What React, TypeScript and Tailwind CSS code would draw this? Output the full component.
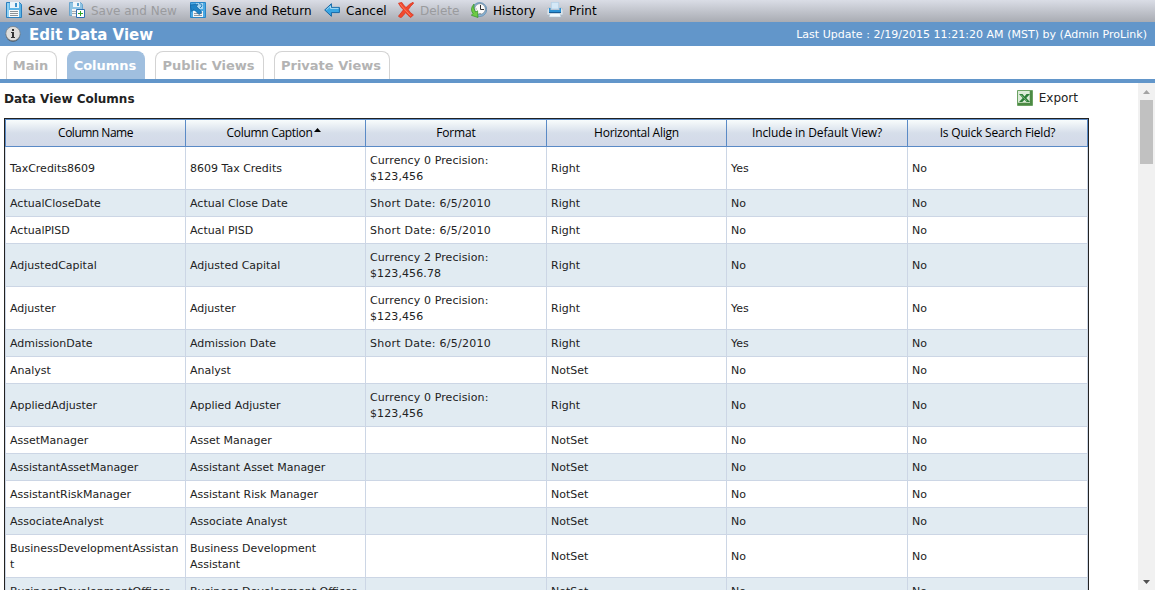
import React from "react";

const SaveIcon = () => (
	<svg className="w-4 h-4 shrink-0" viewBox="0 0 16 16" aria-hidden="true">
		<path d="M.5.5h13l2 2v13H.5z" fill="#5db4e6" stroke="#2a7fbf" />
		<path d="M1 1h2v14H1z" fill="#8fd0f3" />
		<path d="M4 0h9v6H4z" fill="#eaf4fb" />
		<path d="M9 1h2v4H9z" fill="#3a8fca" />
		<path d="M3 8h10v7H3z" fill="#fafafa" />
		<path d="M4 9.5h8M4 11.5h8M4 13.5h8" stroke="#8d9296" />
	</svg>
);

const SaveNewIcon = () => (
	<svg className="w-4 h-4 shrink-0" viewBox="0 0 16 16" aria-hidden="true">
		<path d="M.5.5h11l2 2v11H.5z" fill="#8fc4e4" stroke="#6ba5cd" />
		<path d="M4 0h7v5H4z" fill="#f0f6fa" />
		<path d="M8 1h2v3H8z" fill="#5a9fcc" />
		<path d="M3 7h8v7H3z" fill="#f5f5f5" />
		<path d="M3 9.5h5M3 11.5h5" stroke="#a5aaae" />
		<path d="M7.5 7.5h8v8h-8z" fill="#fff" stroke="#2f70b3" />
		<path d="M9 11.5h5M11.5 9v5" stroke="#30a52c" />
	</svg>
);

const SaveReturnIcon = () => (
	<svg className="w-4 h-4 shrink-0" viewBox="0 0 16 16" aria-hidden="true">
		<path d="M.5.5h15v15H.5z" fill="#4ba9e3" stroke="#2a86c8" />
		<path d="M6 1h7v6H6z" fill="#a9d6f1" />
		<path d="M3 9h10v6H3z" fill="#f5f6f7" />
		<path d="M4 11.5h8M4 13.5h8" stroke="#9198a0" />
		<path d="M0 3 8 2.2 6.6 4.6 12 10.2 9 12.6 4 7.4 1.6 9.4z" fill="#1f83c6" stroke="#0e5c98" strokeWidth=".6" />
		<path d="M9 1.6q3 0 3 2.4l-2 2" fill="none" stroke="#267fbe" />
	</svg>
);

const CancelIcon = () => (
	<svg className="w-4 h-4 shrink-0" viewBox="0 0 16 16" aria-hidden="true">
		<path
			d="M.7 8 7.4 1.7V5.4H15.4V10.6H7.4V14.3z"
			fill="#39a6e3"
			stroke="#1467a6"
			strokeLinejoin="round"
		/>
		<path d="M2.3 7.8 6.5 4V6.4h8" fill="none" stroke="#a8dcf5" />
	</svg>
);

const DeleteIcon = () => (
	<svg className="w-4 h-4 shrink-0" viewBox="0 0 16 16" aria-hidden="true">
		<path
			d="M.5 1.2 3.8.4Q5.5 3.2 8 5.6 11 2 15 .3L15.7 1.3Q12.4 4 10.2 7.7 12.2 11 15.4 13L12.6 15.5Q9.8 13.4 7.6 10.6 5.3 14 2.8 15.8L.4 14.3Q3 11 5.4 7.8 2.3 5 .5 1.2z"
			fill="#f2492d"
			stroke="#d42b17"
			strokeWidth=".7"
		/>
		<path d="M2 1.7Q5 6 12.5 13.5" fill="none" stroke="#ff8b6b" strokeWidth=".8" />
	</svg>
);

const HistoryIcon = () => (
	<svg className="w-4 h-4 shrink-0" viewBox="0 0 16 16" aria-hidden="true">
		<circle cx="8.7" cy="7.5" r="7" fill="#8fb9d8" stroke="#477ba8" strokeWidth=".6" />
		<circle cx="9" cy="7" r="5.4" fill="#fafafa" stroke="#516779" strokeWidth=".6" />
		<path d="M9.5 3v4.5H13" fill="none" stroke="#333" />
		<path d="M9 11v1M4.8 7h.8" stroke="#444" strokeWidth=".8" />
		<path
			d="M3 2Q-1.5 7 2 11.5L.3 13.3 7 15.5 6.6 8.8 4.5 10Q2 6.5 3 2z"
			fill="#6ecb43"
			stroke="#319027"
			strokeWidth=".7"
		/>
	</svg>
);

const PrintIcon = () => (
	<svg className="w-4 h-4 shrink-0" viewBox="0 0 16 16" aria-hidden="true">
		<path d="M4.3.3h7.4V7H4.3z" fill="#d4e8f7" stroke="#a5c8e3" strokeWidth=".6" />
		<path d="M1 6h2v3h10V6h2l1 2v5H0V8z" fill="#dce4ea" stroke="#a1b0bc" strokeWidth=".5" />
		<path d="M2 6h1.5v2h9V6H14v4.5H2z" fill="#2b91d5" />
		<path d="M2 10h12v1H2z" fill="#175c96" />
		<path d="M3 11.5h10l1 3.5H2z" fill="#f3f9fd" stroke="#a5bdd0" strokeWidth=".5" />
	</svg>
);

const InfoIcon = () => (
	<svg className="w-4 h-4 shrink-0" viewBox="0 0 16 16" aria-hidden="true">
		<circle cx="8" cy="8.6" r="7.2" fill="#48535e" />
		<circle cx="8" cy="7.6" r="7.2" fill="#dededc" stroke="#777c81" strokeWidth=".7" />
		<path d="M7 3h2v2H7zM6 6h3v5h1v1H6v-1h1V7H6z" fill="#333" />
	</svg>
);

const ExcelIcon = () => (
	<svg className="w-4 h-4 shrink-0" viewBox="0 0 16 16" aria-hidden="true">
		<path d="M.5.5h15v15H.5z" fill="#b5d3ae" stroke="#6ba263" />
		<path d="M1 1h11v11H1z" fill="#dcebd8" />
		<path d="M1 14h13V1" fill="none" stroke="#4c8a44" strokeWidth="2" />
		<path d="M2 4h3.5l2 2.4L9.5 4H13L9.3 8l3.7 4H9.6L7.5 9.7 5.3 12H2l3.7-4z" fill="#2c7d38" />
		<path d="M4 4.8l6 6.4" stroke="#86bf80" strokeWidth=".8" />
	</svg>
);

const actions = [
	{ label: "Save", icon: <SaveIcon />, className: "w-[63px]", text: "" },
	{ label: "Save and New", icon: <SaveNewIcon />, className: "w-[121px]", text: "text-[#9a9b9e]" },
	{ label: "Save and Return", icon: <SaveReturnIcon />, className: "w-[134px]", text: "" },
	{ label: "Cancel", icon: <CancelIcon />, className: "w-[74px]", text: "" },
	{ label: "Delete", icon: <DeleteIcon />, className: "w-[73px]", text: "text-[#9a9b9e]" },
	{ label: "History", icon: <HistoryIcon />, className: "w-[76px]", text: "" },
	{ label: "Print", icon: <PrintIcon />, className: "w-[60px]", text: "" },
];

const tabs = [
	{ label: "Main", className: "w-[51px]" },
	{ label: "Columns", className: "w-[78px]", active: true },
	{ label: "Public Views", className: "w-[109px]" },
	{ label: "Private Views", className: "w-[116px]" },
];

const headers = [
	{ label: "Column Name", className: "tracking-[-0.5px]" },
	{ label: "Column Caption", className: "tracking-[-0.3px] pr-1", sorted: true },
	{ label: "Format", className: "tracking-[-0.15px]" },
	{ label: "Horizontal Align", className: "tracking-[-0.25px]" },
	{ label: "Include in Default View?", className: "tracking-[-0.12px]" },
	{ label: "Is Quick Search Field?", className: "tracking-[-0.18px]" },
];

const currency0 = "Currency 0 Precision:\n$123,456";
const currency2 = "Currency 2 Precision:\n$123,456.78";
const shortDate = "Short Date: 6/5/2010";

const rows = [
	["TaxCredits8609", "8609 Tax Credits", currency0, "Right", "Yes", "No"],
	["ActualCloseDate", "Actual Close Date", shortDate, "Right", "No", "No"],
	["ActualPISD", "Actual PISD", shortDate, "Right", "No", "No"],
	["AdjustedCapital", "Adjusted Capital", currency2, "Right", "No", "No"],
	["Adjuster", "Adjuster", currency0, "Right", "Yes", "No"],
	["AdmissionDate", "Admission Date", shortDate, "Right", "Yes", "No"],
	["Analyst", "Analyst", "", "NotSet", "No", "No"],
	["AppliedAdjuster", "Applied Adjuster", currency0, "Right", "No", "No"],
	["AssetManager", "Asset Manager", "", "NotSet", "No", "No"],
	["AssistantAssetManager", "Assistant Asset Manager", "", "NotSet", "No", "No"],
	["AssistantRiskManager", "Assistant Risk Manager", "", "NotSet", "No", "No"],
	["AssociateAnalyst", "Associate Analyst", "", "NotSet", "No", "No"],
	["BusinessDevelopmentAssistant", "Business Development Assistant", "", "NotSet", "No", "No"],
	["BusinessDevelopmentOfficer", "Business Development Officer", "", "NotSet", "No", "No"],
];

const GRID = "grid grid-cols-[180px_180px_181px_180px_181px_180px]";

const App = () => {
	return (
		<div className="flex flex-col w-[1155px] h-[590px] overflow-hidden bg-white text-[#222] font-['DejaVu_Sans',sans-serif]">
			<div className="flex h-[22px] shrink-0 pl-1.5 bg-linear-to-b from-[#dadde6] to-[#a9acb3] text-[12px] leading-[19px] text-black">
				{actions.map((action) => (
					<button
						key={action.label}
						className={`flex shrink-0 pt-0.5 gap-1.5 whitespace-nowrap ${action.className}`}
					>
						{action.icon}
						<span className={action.text}>{action.label}</span>
					</button>
				))}
			</div>

			<div className="flex h-6 shrink-0 items-center justify-between bg-[#6296ca] pl-[5px] pr-2 text-white">
				<div className="flex items-center gap-2">
					<InfoIcon />
					<h1 className="pt-0.5 text-[15px] leading-[22px] font-bold">Edit Data View</h1>
				</div>
				<span className="pt-0.5 text-[11px] leading-[22px] tracking-[0.02px]">
					Last Update : 2/19/2015 11:21:20 AM (MST) by (Admin ProLink)
				</span>
			</div>

			<div className="flex h-[37px] shrink-0 items-end gap-2.5 border-b-4 border-[#6296ca] pl-1.5">
				{tabs.map((tab) => (
					<button
						key={tab.label}
						className={`h-7 rounded-t-lg border border-b-0 pr-0.5 text-center text-[13px] leading-[27px] font-bold whitespace-nowrap ${tab.className} ${
							tab.active
								? "border-[#a0bfdf] bg-[#a0bfdf] text-white"
								: "border-[#d3d3d3] text-[#b3b3b3]"
						}`}
					>
						{tab.label}
					</button>
				))}
			</div>

			<div className="flex min-h-0 flex-1">
				<div className="flex-1 overflow-hidden pl-1">
					<div className="flex h-[35px] items-start justify-between pr-[60px]">
						<h2 className="text-[12px] leading-8 font-bold">Data View Columns</h2>
						<div className="flex gap-1.5 pt-[7px] text-[12px] leading-4">
							<ExcelIcon />
							<span>Export</span>
						</div>
					</div>

					<div className="w-[1085px] border border-[#222] text-[11px] leading-4">
						<div
							className={`${GRID} h-7 border border-r-0 border-[#5a8ac6] bg-linear-to-b from-[#f8fcfc] via-[#d6deea] to-[#d2d9e8] font-['Open_Sans',sans-serif] text-[12px] leading-[26px] text-black`}
						>
							{headers.map((header) => (
								<div
									key={header.label}
									className={`flex justify-center border-r border-[#5a8ac6] whitespace-nowrap ${header.className}`}
								>
									{header.label}
									{header.sorted && (
										<svg className="ml-px mt-2 h-1 w-[7px]" viewBox="0 0 7 4" aria-hidden="true">
											<path d="M3.5 0 7 4H0z" fill="#000" />
										</svg>
									)}
								</div>
							))}
						</div>
						{rows.map((row, index) => (
							<div
								key={row[0]}
								className={`${GRID} border-l border-[#ccd6e5] ${index % 2 ? "bg-[#e1ebf2]" : "bg-white"}`}
							>
								{row.map((cell, i) => (
									<div
										key={i}
										className={`flex min-h-[27px] items-center border-r border-b border-[#ccd6e5] pt-1.5 pb-1 px-1 ${
											cell === shortDate ? "tracking-[0.25px]" : i === 2 ? "tracking-[0.1px]" : ""
										}`}
									>
										<span className="min-w-0 whitespace-pre-line wrap-anywhere">{cell}</span>
									</div>
								))}
							</div>
						))}
					</div>
				</div>

				<div className="flex w-[17px] flex-col items-center bg-[#f1f1f1]">
					<svg className="mt-[7px] h-1 w-[7px]" viewBox="0 0 7 4" aria-hidden="true">
						<path d="M3.5 0 7 4H0z" fill="#a3a3a3" />
					</svg>
					<div className="mt-1.5 h-16 w-[13px] bg-[#c1c1c1]" />
					<svg className="mt-auto mb-1.5 h-1 w-[7px]" viewBox="0 0 7 4" aria-hidden="true">
						<path d="M0 0h7L3.5 4z" fill="#505050" />
					</svg>
				</div>
			</div>
		</div>
	);
};

export default App;
